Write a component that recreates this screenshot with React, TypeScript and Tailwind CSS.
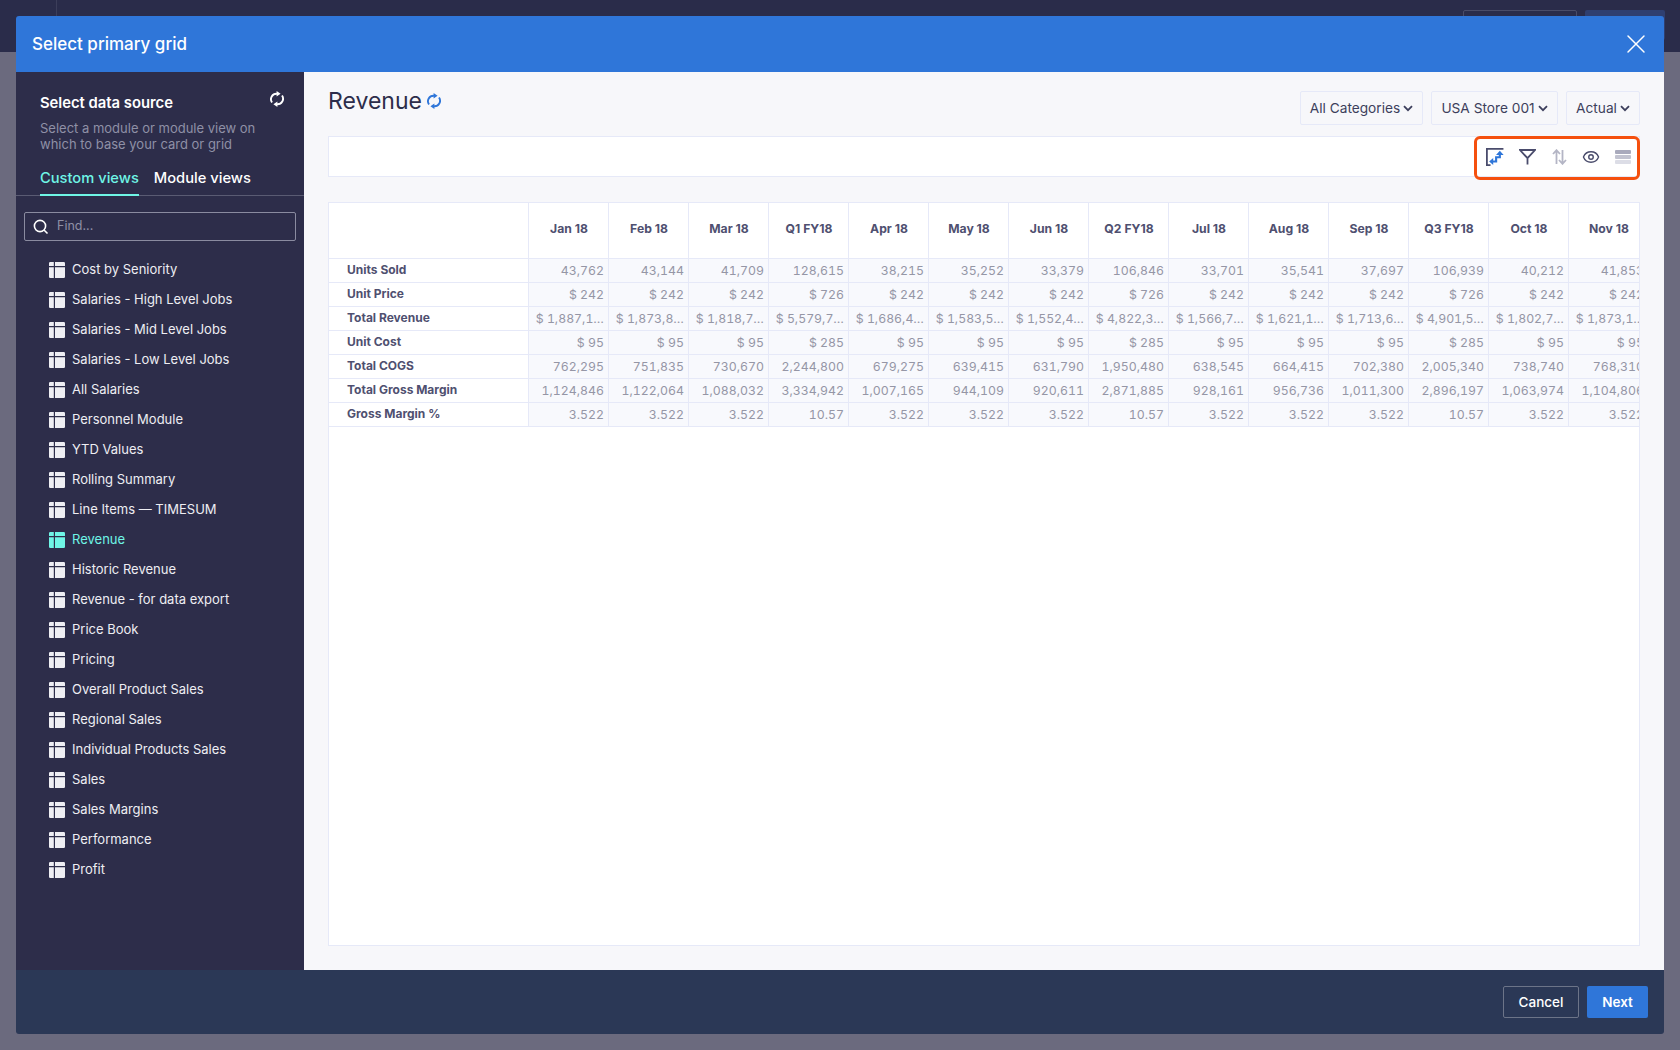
import type { ReactNode } from 'react';
import { Eye, X } from 'lucide-react';

const views = [
  'Cost by Seniority',
  'Salaries - High Level Jobs',
  'Salaries - Mid Level Jobs',
  'Salaries - Low Level Jobs',
  'All Salaries',
  'Personnel Module',
  'YTD Values',
  'Rolling Summary',
  'Line Items — TIMESUM',
  'Revenue',
  'Historic Revenue',
  'Revenue - for data export',
  'Price Book',
  'Pricing',
  'Overall Product Sales',
  'Regional Sales',
  'Individual Products Sales',
  'Sales',
  'Sales Margins',
  'Performance',
  'Profit',
];

const columns = ['Jan 18', 'Feb 18', 'Mar 18', 'Q1 FY18', 'Apr 18', 'May 18', 'Jun 18', 'Q2 FY18', 'Jul 18', 'Aug 18', 'Sep 18', 'Q3 FY18', 'Oct 18', 'Nov 18'];

const rows: { label: string; values: string[] }[] = [
  { label: 'Units Sold', values: ['43,762', '43,144', '41,709', '128,615', '38,215', '35,252', '33,379', '106,846', '33,701', '35,541', '37,697', '106,939', '40,212', '41,853'] },
  { label: 'Unit Price', values: ['$ 242', '$ 242', '$ 242', '$ 726', '$ 242', '$ 242', '$ 242', '$ 726', '$ 242', '$ 242', '$ 242', '$ 726', '$ 242', '$ 242'] },
  { label: 'Total Revenue', values: ['$ 1,887,1…', '$ 1,873,8…', '$ 1,818,7…', '$ 5,579,7…', '$ 1,686,4…', '$ 1,583,5…', '$ 1,552,4…', '$ 4,822,3…', '$ 1,566,7…', '$ 1,621,1…', '$ 1,713,6…', '$ 4,901,5…', '$ 1,802,7…', '$ 1,873,1…'] },
  { label: 'Unit Cost', values: ['$ 95', '$ 95', '$ 95', '$ 285', '$ 95', '$ 95', '$ 95', '$ 285', '$ 95', '$ 95', '$ 95', '$ 285', '$ 95', '$ 95'] },
  { label: 'Total COGS', values: ['762,295', '751,835', '730,670', '2,244,800', '679,275', '639,415', '631,790', '1,950,480', '638,545', '664,415', '702,380', '2,005,340', '738,740', '768,310'] },
  { label: 'Total Gross Margin', values: ['1,124,846', '1,122,064', '1,088,032', '3,334,942', '1,007,165', '944,109', '920,611', '2,871,885', '928,161', '956,736', '1,011,300', '2,896,197', '1,063,974', '1,104,806'] },
  { label: 'Gross Margin %', values: ['3.522', '3.522', '3.522', '10.57', '3.522', '3.522', '3.522', '10.57', '3.522', '3.522', '3.522', '10.57', '3.522', '3.522'] },
];

function GridIcon() {
  return (
    <svg width="16" height="16" viewBox="0 0 16 16" className="shrink-0" fill="currentColor">
      <path d="M1.2 0h3.6v4H0V1.2A1.2 1.2 0 0 1 1.2 0z" />
      <path d="M6 0h8.8A1.2 1.2 0 0 1 16 1.2V4H6z" />
      <path d="M0 5.2h4.8V16H1.2A1.2 1.2 0 0 1 0 14.8z" />
      <path d="M6 5.2h10v9.6a1.2 1.2 0 0 1-1.2 1.2H6z" />
    </svg>
  );
}

function SyncIcon({ className }: { className: string }) {
  return (
    <svg width="16" height="16" viewBox="0 0 16 16" fill="none" stroke="currentColor" strokeWidth="1.9" className={className}>
      <path d="M3 11.5A5.6 5.6 0 0 1 8 2.7" />
      <path d="M13 4.5A5.6 5.6 0 0 1 8 13.3" />
      <path d="M7.6 0l4 2.8-4 2.8zM8.4 10.4l-4 2.8 4 2.8z" fill="currentColor" stroke="none" />
    </svg>
  );
}

function Dropdown({ label, width }: { label: string; width: string }) {
  return (
    <div className={`flex h-[34px] items-center justify-center gap-[3px] rounded-[2px] border border-[#e6e9f8] text-[13.7px] text-[#3d3f5c] ${width}`}>
      {label}
      <svg width="10" height="7" viewBox="0 0 10 7" fill="none" stroke="currentColor" strokeWidth="1.8">
        <path d="M1 1.2l4 4 4-4" />
      </svg>
    </div>
  );
}

function PivotIcon() {
  return (
    <svg width="18" height="18" viewBox="0 0 16 16" fill="none">
      <path d="M15.5 0.8H0.8v14.4H4" stroke="#4a4c6c" strokeWidth="1.6" />
      <path d="M12.3 5.5v2.7H9v3.8H6" stroke="#2f76d9" strokeWidth="1.9" />
      <path d="M12.3 2.4l3.4 3.8H8.9zM2.8 12l3.6-3.2v6.4z" fill="#2f76d9" />
    </svg>
  );
}

function FilterIcon() {
  return (
    <svg width="17" height="16" viewBox="0 0 17 16" fill="none" stroke="#4a4c6c" strokeWidth="1.8">
      <path d="M1 1h15L8.5 9.2zM8.5 9v6.5" />
    </svg>
  );
}

function SortIcon() {
  return (
    <svg width="15" height="16" viewBox="0 0 15 16" fill="none" stroke="#b4b5c5" strokeWidth="1.8">
      <path d="M4.5 15V1.5M1 5l3.5-3.8L8 5" />
      <path d="M10.5 1v13.5M7 11l3.5 3.8L14 11" />
    </svg>
  );
}

function RowsIcon() {
  return (
    <div className="flex w-4 flex-col gap-px">
      <div className="h-1 rounded-[1px] bg-[#a9aabc]" />
      <div className="h-1 rounded-[1px] bg-[#c2c3d0]" />
      <div className="h-1 rounded-[1px] bg-[#dcdde6]" />
    </div>
  );
}

function ToolSlot({ children }: { children: ReactNode }) {
  return <div className="flex w-8 shrink-0 items-center justify-center">{children}</div>;
}

function Sidebar() {
  return (
    <aside className="flex w-[288px] shrink-0 flex-col bg-[#2d2d4a]">
      <div className="flex items-start justify-between pl-6 pr-[19px] pt-[21px]">
        <div className="text-[14.8px] font-semibold leading-5 text-white">Select data source</div>
        <SyncIcon className="-mt-[2px] text-white" />
      </div>
      <p className="mt-[7px] px-6 text-[13px] leading-4 text-[#8f90a6]">
        Select a module or module view on which to base your card or grid
      </p>
      <div className="mt-4 flex gap-[15px] border-b border-[#5a5b73] px-6">
        <div className="-mb-px border-b-2 border-[#6ff5e6] pb-[6px] text-[14.7px] font-medium leading-5 text-[#6ff5e6]">Custom views</div>
        <div className="pb-[6px] text-[14.7px] font-medium leading-5 text-white">Module views</div>
      </div>
      <div className="mx-2 mt-4 flex h-[29px] items-center gap-2 rounded-[2px] border border-[#8a8ba0] px-2">
        <svg width="16" height="16" viewBox="0 0 16 16" fill="none" stroke="white" strokeWidth="1.6">
          <circle cx="7" cy="7" r="5.6" />
          <path d="M11 11l3.5 3.5" />
        </svg>
        <span className="text-[12.5px] text-[#8f90a6]">Find...</span>
      </div>
      <ul className="mt-[14px] pl-[33px]">
        {views.map((name) => (
          <li
            key={name}
            className={`flex h-[30px] items-center gap-[7px] text-[13px] ${name === 'Revenue' ? 'text-[#6ff5e6]' : 'text-[#eeeef3]'}`}
          >
            <GridIcon />
            {name}
          </li>
        ))}
      </ul>
    </aside>
  );
}

function DataTable() {
  return (
    <div className="mt-[25px] min-h-0 flex-1 overflow-hidden border border-[#e6e9f8] bg-white">
      <div className="flex h-[56px] w-[1320px] border-b border-[#e6e9f8]">
        <div className="w-[200px] shrink-0 border-r border-[#e6e9f8]" />
        {columns.map((col) => (
          <div key={col} className="flex w-[80px] shrink-0 items-center justify-center border-r border-[#e6e9f8] pb-[2px] pl-px text-[12.2px] font-bold text-[#4f5070]">
            {col}
          </div>
        ))}
      </div>
      {rows.map((row) => (
        <div key={row.label} className="flex h-6 w-[1320px] border-b border-[#e6e9f8]">
          <div className="w-[200px] shrink-0 border-r border-[#e6e9f8] pl-[18px] text-[12px] font-bold leading-[21px] text-[#4f5070]">
            {row.label}
          </div>
          {row.values.map((value, i) => (
            <div key={i} className="w-[80px] shrink-0 whitespace-nowrap border-r border-[#e6e9f8] bg-[#f8f9fd] pr-[4px] text-right text-[12.3px] leading-[23px] tabular-nums text-[#9596a6]">
              {value}
            </div>
          ))}
        </div>
      ))}
    </div>
  );
}

export default function App() {
  return (
    <div className="relative h-[1050px] w-[1680px] overflow-hidden bg-[#6b6a7e] font-['Inter','Liberation_Sans',sans-serif]">
      {/* page behind the modal */}
      <div className="relative h-[52px] bg-[#2a2c4a]">
        <div className="absolute left-[56px] top-0 h-full w-px bg-[#3c3e5a]" />
        <div className="absolute left-[1463px] top-[10px] h-[30px] w-[114px] rounded-[2px] border border-[#4a4c68]" />
        <div className="absolute left-[1585px] top-[10px] h-[30px] w-[80px] rounded-[2px] bg-[#2f3f70]" />
      </div>

      <div className="absolute left-4 top-4 flex h-[1018px] w-[1648px] flex-col overflow-hidden rounded-[3px]">
        <header className="flex h-[56px] shrink-0 items-center justify-between bg-[#2f76d9] pl-4 pr-3">
          <h1 className="pt-[2px] text-[17px] font-medium text-white">Select primary grid</h1>
          <X className="text-white" size={32} strokeWidth={1.1} />
        </header>

        <div className="flex min-h-0 flex-1">
          <Sidebar />
          <main className="flex min-w-0 flex-1 flex-col bg-[#f7f7fa] px-6 pb-6 pt-[14px]">
            <div className="flex h-[50px] items-start justify-between">
              <div className="flex items-center gap-1">
                <h2 className="text-[23px] leading-[30px] text-[#2d2d4a]">Revenue</h2>
                <SyncIcon className="text-[#2f76d9]" />
              </div>
              <div className="flex gap-2 pt-[5px]">
                <Dropdown label="All Categories" width="w-[123px]" />
                <Dropdown label="USA Store 001" width="w-[127px]" />
                <Dropdown label="Actual" width="w-[74px]" />
              </div>
            </div>

            <div className="relative h-[41px] shrink-0 border border-[#e6e9f8] bg-white">
              <div className="absolute -right-px -top-px flex h-[44px] w-[166px] items-center rounded-[6px] border-[3px] border-[#f5500e] pb-[2px] pl-[2px]">
                <ToolSlot><PivotIcon /></ToolSlot>
                <ToolSlot><FilterIcon /></ToolSlot>
                <ToolSlot><SortIcon /></ToolSlot>
                <ToolSlot><Eye size={18} strokeWidth={1.9} className="text-[#4a4c6c]" /></ToolSlot>
                <ToolSlot><RowsIcon /></ToolSlot>
              </div>
            </div>

            <DataTable />
          </main>
        </div>

        <footer className="flex h-[64px] shrink-0 items-center justify-end gap-2 bg-[#2b3856] pr-4">
          <button className="h-8 w-[76px] rounded-[2px] border border-[#6c7488] text-[13.5px] font-medium text-white">Cancel</button>
          <button className="h-8 w-[61px] rounded-[2px] bg-[#2f76d9] text-[13.5px] font-semibold text-white">Next</button>
        </footer>
      </div>
    </div>
  );
}
